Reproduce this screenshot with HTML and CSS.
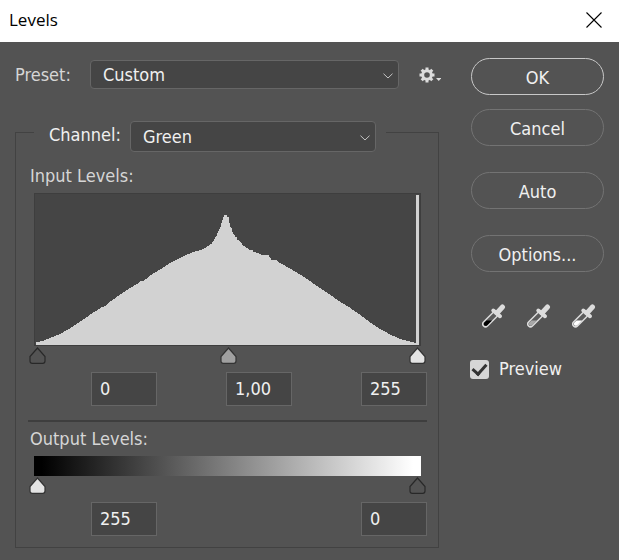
FILE: index.html
```
<!DOCTYPE html>
<html lang="en">
<head>
  <meta charset="UTF-8">
  <title>Levels</title>
  <meta name="viewport" content="width=device-width, initial-scale=1.0">
  <link rel="stylesheet" href="styles.css">
</head>
<body>

<header class="titlebar">
  <h1>Levels</h1>
  <button type="button" class="close" aria-label="Close">
    <svg width="16" height="16" viewBox="0 0 16 16"><path d="M.5.5l15 15M15.5.5l-15 15" stroke="#000" stroke-width="1.1"/></svg>
  </button>
</header>

<form class="dialog">
  <div class="settings">
    <div class="preset">
      <label for="preset">Preset:</label>
      <div class="dropdown">
        <select id="preset">
          <option>Default</option>
          <option selected>Custom</option>
        </select>
        <svg class="chevron" width="10" height="6" viewBox="0 0 10 6"><path d="M.5.7L5 5 9.500.7"/></svg>
      </div>
      <button type="button" class="gear" aria-label="Preset options">
        <svg width="22" height="16" viewBox="0 0 22 16">
          <circle cx="8" cy="8" r="4.300" fill="none" stroke="#dcdcdc" stroke-width="3"/>
          <path d="M8 .5v3M8 12.500v3M.5 8h3M12.500 8h3M2.700 2.700l2 2M11.300 11.300l2 2M13.300 2.700l-2 2M4.700 11.300l-2 2" stroke="#dcdcdc" stroke-width="3"/>
          <path d="M17 11h5.500l-2.750 3z" fill="#dcdcdc"/>
        </svg>
      </button>
    </div>

    <fieldset>
      <legend>
        <label for="channel">Channel:</label>
        <div class="dropdown">
          <select id="channel">
            <option>RGB</option>
            <option>Red</option>
            <option selected>Green</option>
            <option>Blue</option>
          </select>
          <svg class="chevron" width="10" height="6" viewBox="0 0 10 6"><path d="M.5.7L5 5 9.500.7"/></svg>
        </div>
      </legend>

      <p class="caption">Input Levels:</p>
      <div class="histogram">
        <svg viewBox="36 196 384 149" preserveAspectRatio="none">
          <path d="M36 345V342.500L44 340.500 50 338 60 334 70 328.500 80 322 90 315 100 308.500 103 307V308L110 302 120 295 130 288.500 140 282.500V281L143 282 150 276 160 270 170 263.500 180 258.500 186 255.500 195 252 200 251 206 248 212 244 215 239 216 237H217V235L219 231 220 228H221V225L222 223 224 216.500 225 216H227V218H229V221L230 226 231 229H232V232L234 235 236 238H237V240L240 242 243 246 246 248 250 251H253V252L260 254.500 263 256H269V257L272 261 275 260 280 263.500 290 269 300 275 310 281.500 320 288.500 330 295 340 302 350 308 360 315 370 322.500 380 329 390 334.500 400 339 410 341.500 416 343V196H419V345Z"/>
        </svg>
      </div>
      <div class="sliders">
        <input type="range" class="dark" min="0" max="255" value="0" aria-label="Shadow input">
        <input type="range" class="mid" min="0" max="255" value="128" aria-label="Midtone input">
        <input type="range" class="light" min="0" max="255" value="255" aria-label="Highlight input">
      </div>
      <div class="fields">
        <input type="text" value="0" aria-label="Shadow input level">
        <input type="text" value="1,00" aria-label="Midtone input level">
        <input type="text" value="255" aria-label="Highlight input level">
      </div>

      <hr>

      <p class="caption output">Output Levels:</p>
      <div class="ramp"></div>
      <div class="sliders">
        <input type="range" class="light" min="0" max="255" value="0" aria-label="Shadow output">
        <input type="range" class="dark" min="0" max="255" value="255" aria-label="Highlight output">
      </div>
      <div class="fields">
        <input type="text" value="255" aria-label="Shadow output level">
        <input type="text" value="0" aria-label="Highlight output level">
      </div>
    </fieldset>
  </div>

  <div class="actions">
    <div class="group">
      <button type="button" class="pill primary">OK</button>
      <button type="button" class="pill">Cancel</button>
    </div>
    <button type="button" class="pill">Auto</button>
    <button type="button" class="pill">Options...</button>

    <div class="pickers">
      <button type="button" class="picker" aria-label="Set black point">
        <svg width="24" height="24" viewBox="0 0 24 24">
          <path class="glass" d="M13 10.500L3.500 20"/>
          <path class="inside" d="M13 10.500L3.500 20"/>
          <path d="M4.500 16.500H10L5.300 21.300Q3.800 22.300 2.300 21.300 1.300 20 2.200 18.800Z" fill="#000"/>
          <path class="cap" d="M11.300 6.500l6.700 5.700"/>
          <path class="bulb" d="M15 9L20.500 3"/>
        </svg>
      </button>
      <button type="button" class="picker" aria-label="Set gray point">
        <svg width="24" height="24" viewBox="0 0 24 24">
          <path class="glass" d="M13 10.500L3.500 20"/>
          <path class="inside" d="M13 10.500L3.500 20"/>
          <path d="M4.500 16.500H10L5.300 21.300Q3.800 22.300 2.300 21.300 1.300 20 2.200 18.800Z" fill="#a8a8a8"/>
          <path class="cap" d="M11.300 6.500l6.700 5.700"/>
          <path class="bulb" d="M15 9L20.500 3"/>
        </svg>
      </button>
      <button type="button" class="picker" aria-label="Set white point">
        <svg width="24" height="24" viewBox="0 0 24 24">
          <path class="glass" d="M13 10.500L3.500 20"/>
          <path class="inside" d="M13 10.500L3.500 20"/>
          <path d="M4.500 16.500H10L5.300 21.300Q3.800 22.300 2.300 21.300 1.300 20 2.200 18.800Z" fill="#fff"/>
          <path class="cap" d="M11.300 6.500l6.700 5.700"/>
          <path class="bulb" d="M15 9L20.500 3"/>
        </svg>
      </button>
    </div>

    <label class="preview"><input type="checkbox" checked> Preview</label>
  </div>
</form>

</body>
</html>
```
FILE: styles.css
```
* {
  box-sizing: border-box;
}

body {
  margin: 0;
  min-height: 100vh;
  background: #535353;
  color: #f0f0f0;
  font-family: Tahoma, "DejaVu Sans Condensed", "Noto Sans", sans-serif;
  font-size: 18px;
  line-height: 24px;
}

button,
select,
input {
  font: inherit;
  color: inherit;
  margin: 0;
}

button {
  padding: 0;
  border: none;
  background: none;
  cursor: pointer;
}

svg {
  display: block;
}

/* title bar */
.titlebar {
  display: flex;
  align-items: center;
  justify-content: space-between;
  height: 42px;
  padding: 0 17px 2px 9px;
  background: #fff;
  color: #000;
}

.titlebar h1 {
  margin: 0;
  font-family: "Open Sans", "Segoe UI", sans-serif;
  font-size: 17px;
  font-weight: normal;
}

.dialog {
  display: flex;
  gap: 32px;
  padding: 16px 15px 12px;
}

.settings {
  flex: 1;
  min-width: 0;
}

/* preset row */
.preset {
  display: flex;
  align-items: center;
  height: 29px;
  margin: 2px -2px 32px 0;
}

.preset label {
  width: 75px;
  color: #d6d6d6;
}

.dropdown {
  position: relative;
  flex: 1;
  height: 100%;
}

.dropdown select {
  display: block;
  width: 100%;
  height: 100%;
  padding: 0 30px 0 12px;
  appearance: none;
  border: 1px solid #666;
  border-radius: 4px;
  background: #454545;
}

.chevron {
  position: absolute;
  right: 6px;
  top: 50%;
  margin-top: -2px;
  fill: none;
  stroke: #c4c4c4;
  pointer-events: none;
}

.gear {
  margin-left: 20px;
}

/* channel group */
fieldset {
  min-width: 0;
  margin: 0;
  padding: 0 11px 11px 12px;
  border: 1px solid #424242;
}

legend {
  display: flex;
  width: 352px;
  max-width: 100%;
  height: 23px;
  margin-left: 6px;
  padding: 0 10px 0 15px;
}

legend label {
  width: 81px;
  padding-top: 2px;
}

legend .dropdown {
  height: 31px;
}

.caption {
  margin: 20px 2px 5px;
  color: #d6d6d6;
}

.caption.output {
  margin-top: 5px;
}

.histogram {
  height: 153px;
  margin: 0 6px;
  padding: 1px 0 0 1px;
  border: 1px solid #3e3e3e;
  background: #454545;
}

.histogram svg {
  width: 100%;
  height: 100%;
  fill: #d2d2d2;
  shape-rendering: crispEdges;
}

.sliders {
  display: grid;
  height: 17px;
  margin: 1px 1px 8px;
}

.sliders input {
  grid-area: 1 / 1;
  width: 100%;
  height: 17px;
  appearance: none;
  background: none;
  pointer-events: none;
}

.sliders input::-webkit-slider-thumb {
  appearance: none;
  width: 17px;
  height: 17px;
  pointer-events: auto;
}

.dark::-webkit-slider-thumb {
  background: url("data:image/svg+xml,%3Csvg xmlns='http://www.w3.org/2000/svg' width='17' height='17'%3E%3Cpath d='M8.500 1L16 9.500V14Q16 16.300 13.700 16.300H3.300Q1 16.300 1 14V9.500Z' fill='%23535353' stroke='%23282828' stroke-width='1.200'/%3E%3C/svg%3E");
}

.mid::-webkit-slider-thumb {
  background: url("data:image/svg+xml,%3Csvg xmlns='http://www.w3.org/2000/svg' width='17' height='17'%3E%3Cpath d='M8.500 1L16 9.500V14Q16 16.300 13.700 16.300H3.300Q1 16.300 1 14V9.500Z' fill='%23a0a0a0' stroke='%23333' stroke-width='1.200'/%3E%3C/svg%3E");
}

.light::-webkit-slider-thumb {
  background: url("data:image/svg+xml,%3Csvg xmlns='http://www.w3.org/2000/svg' width='17' height='17'%3E%3Cpath d='M8.500 1L16 9.500V14Q16 16.300 13.700 16.300H3.300Q1 16.300 1 14V9.500Z' fill='%23e4e4e4' stroke='%23333' stroke-width='1.200'/%3E%3C/svg%3E");
}

.fields {
  display: flex;
  justify-content: space-between;
  padding-left: 63px;
}

.fields input {
  width: 66px;
  height: 34px;
  padding: 0 8px 2px;
  border: 1px solid #666;
  background: #454545;
}

hr {
  height: 2px;
  margin: 14px 0 0;
  border: none;
  background: #3e3e3e;
}

.ramp {
  height: 20px;
  margin: 0 6px;
  background: linear-gradient(to right, #000 2%, #fff 98%);
}

/* right column */
.actions {
  display: flex;
  flex-direction: column;
  gap: 26px;
  width: 133px;
}

.group {
  display: grid;
  gap: 14px;
}

.pill {
  height: 37px;
  padding-top: 2px;
  border: 1px solid #737373;
  border-radius: 19px;
}

.primary {
  border-color: #c8c8c8;
}

.pickers {
  display: flex;
  gap: 21px;
  margin: 6px 0 0 11px;
}

.glass,
.inside,
.cap,
.bulb {
  fill: none;
  stroke: #dcdcdc;
  stroke-linecap: round;
}

.glass {
  stroke-width: 7px;
}

.inside {
  stroke: #5c5c5c;
  stroke-width: 4px;
}

.cap {
  stroke-width: 4px;
}

.bulb {
  stroke-width: 5px;
}

/* preview toggle */
.preview {
  display: flex;
  align-items: center;
  gap: 10px;
  margin: 3px 0 0 -1px;
}

.preview input {
  display: grid;
  place-items: center;
  width: 19px;
  height: 19px;
  appearance: none;
  border-radius: 3px;
  background: #d6d6d6;
}

.preview input:checked::before {
  content: "";
  width: 6px;
  height: 11px;
  margin-bottom: 3px;
  border: solid #333;
  border-width: 0 3px 3px 0;
  transform: rotate(42deg);
}
```
